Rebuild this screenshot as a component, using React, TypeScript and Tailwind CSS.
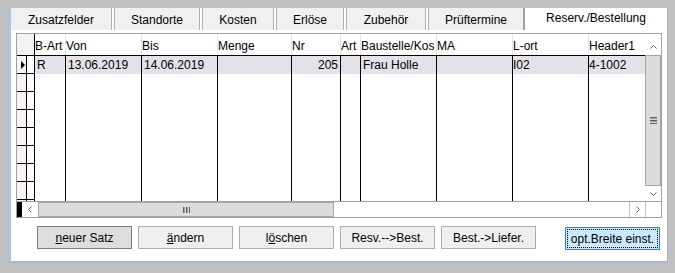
import React from "react";

type Dir = "up" | "down" | "left" | "right";

function Chevron({ dir }: { dir: Dir }) {
  if (dir === "up" || dir === "down") {
    const d = dir === "up" ? "M0.5 4.5 L3.5 1.5 L6.5 4.5" : "M0.5 1.5 L3.5 4.5 L6.5 1.5";
    return (
      <svg width="7" height="6" viewBox="0 0 7 6">
        <path d={d} stroke="#606060" strokeWidth="1" fill="none" />
      </svg>
    );
  }
  const d = dir === "left" ? "M4.5 0.5 L1.5 3.5 L4.5 6.5" : "M1.5 0.5 L4.5 3.5 L1.5 6.5";
  return (
    <svg width="6" height="7" viewBox="0 0 6 7">
      <path d={d} stroke="#606060" strokeWidth="1" fill="none" />
    </svg>
  );
}

function GripV() {
  return (
    <svg width="7" height="7" viewBox="0 0 7 7">
      <rect x="0" y="0" width="7" height="1.5" fill="#606060" />
      <rect x="0" y="3" width="7" height="1.5" fill="#606060" />
      <rect x="0" y="6" width="7" height="1" fill="#606060" />
    </svg>
  );
}

function GripH() {
  return (
    <svg width="7" height="6" viewBox="0 0 7 6">
      <rect x="0" y="0" width="1.5" height="6" fill="#606060" />
      <rect x="3" y="0" width="1.5" height="6" fill="#606060" />
      <rect x="6" y="0" width="1" height="6" fill="#606060" />
    </svg>
  );
}

const rows = [0, 1, 2, 3, 4, 5, 6, 7];

export default function App() {
  return (
    <div className="h-[273px] w-[675px] overflow-hidden bg-[#c0c0c0] pl-[8px] pt-[8px] font-['Liberation_Sans',Arial,sans-serif] text-[12px] leading-[14px] text-black">
      <div className="flex h-[255px] w-[660px] flex-col border-b-2 border-l-[3px] border-r border-b-[#a6bad3] border-l-[#abc3df] border-r-[#a3b3c8] bg-white">
        {/* tab strip */}
        <div className="flex h-[25px] items-start">
          <div className="h-[22px] w-[101px] border-r border-[#b0b0b0] bg-[#f0f0f0] pt-[5px] text-center">Zusatzfelder</div>
          <div className="ml-[2px] h-[22px] w-[86px] border-x border-[#b0b0b0] bg-[#f0f0f0] pt-[5px] text-center">Standorte</div>
          <div className="ml-[2px] h-[22px] w-[72px] border-x border-[#b0b0b0] bg-[#f0f0f0] pt-[5px] text-center">Kosten</div>
          <div className="ml-[2px] h-[22px] w-[68px] border-x border-[#b0b0b0] bg-[#f0f0f0] pt-[5px] text-center">Erlöse</div>
          <div className="ml-[2px] h-[22px] w-[80px] border-x border-[#b0b0b0] bg-[#f0f0f0] pt-[5px] text-center">Zubehör</div>
          <div className="ml-[2px] h-[22px] w-[97px] border-l border-r-2 border-l-[#b0b0b0] border-r-[#a0a0a0] bg-[#f0f0f0] pt-[5px] text-center">Prüftermine</div>
          <div className="h-[25px] flex-1 bg-white pt-[3px] text-center">Reserv./Bestellung</div>
        </div>

        {/* grid */}
        <div className="ml-[5px] flex h-[185px] w-[646px] flex-col border border-[#a0a0a0]">
          <div className="flex h-[167px]">
            <div className="flex w-[628px] flex-col">
              {/* header */}
              <div className="flex h-[22px] border-b border-black">
                <div className="w-[18px] border-r border-black bg-[#f4f1f4]" />
                <div className="w-[31px] overflow-hidden whitespace-nowrap border-r border-[#e4e4e4] pt-[5px]">B-Art</div>
                <div className="w-[76px] overflow-hidden whitespace-nowrap border-r border-[#e4e4e4] pt-[5px]">Von</div>
                <div className="w-[76px] overflow-hidden whitespace-nowrap border-r border-[#e4e4e4] pt-[5px]">Bis</div>
                <div className="w-[74px] overflow-hidden whitespace-nowrap border-r border-[#e4e4e4] pt-[5px]">Menge</div>
                <div className="w-[49px] overflow-hidden whitespace-nowrap border-r border-[#e4e4e4] pt-[5px]">Nr</div>
                <div className="w-[20px] overflow-hidden whitespace-nowrap border-r border-[#e4e4e4] pt-[5px]">Art</div>
                <div className="w-[76px] overflow-hidden whitespace-nowrap border-r border-[#e4e4e4] pt-[5px]">Baustelle/Kos</div>
                <div className="w-[76px] overflow-hidden whitespace-nowrap border-r border-[#e4e4e4] pt-[5px]">MA</div>
                <div className="w-[76px] overflow-hidden whitespace-nowrap border-r border-[#e4e4e4] pt-[5px]">L-ort</div>
                <div className="w-[56px] overflow-hidden whitespace-nowrap pt-[5px]">Header1</div>
              </div>

              {/* body */}
              <div className="flex h-[145px]">
                <div className="flex w-[10px] flex-col border-r border-black bg-[#f7f3f7]">
                  {rows.map((i) => (
                    <div key={i} className="flex h-[18px] shrink-0 items-center border-b border-black pl-[4px]">
                      {i === 0 && (
                        <svg width="4" height="8" viewBox="0 0 4 8">
                          <polygon points="0,0 4,4 0,8" fill="#000" />
                        </svg>
                      )}
                    </div>
                  ))}
                </div>
                <div className="flex w-[8px] flex-col border-r border-black bg-white">
                  {rows.map((i) => (
                    <div key={i} className="h-[18px] shrink-0 border-b border-black" />
                  ))}
                </div>
                <div className="w-[31px] border-r border-black">
                  <div className="h-[18px] overflow-hidden whitespace-nowrap bg-[#e4e2e8] pl-[2px] pt-[2px]">R</div>
                </div>
                <div className="w-[76px] border-r border-black">
                  <div className="h-[18px] overflow-hidden whitespace-nowrap bg-[#e4e2e8] pl-[2px] pt-[2px]">13.06.2019</div>
                </div>
                <div className="w-[76px] border-r border-black">
                  <div className="h-[18px] overflow-hidden whitespace-nowrap bg-[#e4e2e8] pl-[2px] pt-[2px]">14.06.2019</div>
                </div>
                <div className="w-[74px] border-r border-black">
                  <div className="h-[18px] bg-[#e4e2e8]" />
                </div>
                <div className="w-[49px] border-r border-black">
                  <div className="h-[18px] overflow-hidden whitespace-nowrap bg-[#e4e2e8] pr-[2px] pt-[2px] text-right">205</div>
                </div>
                <div className="w-[20px] border-r border-black">
                  <div className="h-[18px] bg-[#e4e2e8]" />
                </div>
                <div className="w-[76px] border-r border-black">
                  <div className="h-[18px] overflow-hidden whitespace-nowrap bg-[#e4e2e8] pl-[2px] pt-[2px]">Frau Holle</div>
                </div>
                <div className="w-[76px] border-r border-black">
                  <div className="h-[18px] bg-[#e4e2e8]" />
                </div>
                <div className="w-[76px] border-r border-black">
                  <div className="h-[18px] overflow-hidden whitespace-nowrap bg-[#e4e2e8] pt-[2px]">I02</div>
                </div>
                <div className="w-[56px]">
                  <div className="h-[18px] overflow-hidden whitespace-nowrap bg-[#e4e2e8] pt-[2px]">4-1002</div>
                </div>
              </div>
            </div>

            {/* vertical scrollbar */}
            <div className="flex w-[16px] flex-col bg-white">
              <div className="flex h-[21px] items-center justify-center pt-[4px]">
                <Chevron dir="up" />
              </div>
              <div className="flex flex-1 items-center justify-center border border-[#a6a6a6] bg-[#dcdcdc]">
                <GripV />
              </div>
              <div className="flex h-[15px] items-center justify-center">
                <Chevron dir="down" />
              </div>
            </div>
          </div>

          {/* horizontal scrollbar */}
          <div className="flex h-[16px] border-t border-[#a0a0a0]">
            <div className="w-[5px] bg-black" />
            <div className="flex w-[16px] items-center justify-center bg-white">
              <Chevron dir="left" />
            </div>
            <div className="flex w-[296px] items-center justify-center border border-[#a6a6a6] bg-[#dcdcdc]">
              <GripH />
            </div>
            <div className="flex-1 bg-white" />
            <div className="flex w-[16px] items-center justify-center border-l border-[#c8c8c8] bg-white">
              <Chevron dir="right" />
            </div>
            <div className="w-[16px] border-l border-[#c8c8c8] bg-white" />
          </div>
        </div>

        {/* buttons */}
        <div className="mt-[8px] flex items-start gap-[6px] pl-[26px]">
          <button className="flex h-[23px] w-[95px] items-center justify-center border border-[#7a7a7a] bg-[#dddddd]">
            <span><u>n</u>euer Satz</span>
          </button>
          <button className="flex h-[23px] w-[95px] items-center justify-center border border-[#adadad] bg-[#efefef]">
            <span><u>ä</u>ndern</span>
          </button>
          <button className="flex h-[23px] w-[95px] items-center justify-center border border-[#adadad] bg-[#efefef]">
            <span>l<u>ö</u>schen</span>
          </button>
          <button className="flex h-[23px] w-[95px] items-center justify-center border border-[#adadad] bg-[#efefef]">
            Resv.--&gt;Best.
          </button>
          <button className="flex h-[23px] w-[95px] items-center justify-center border border-[#adadad] bg-[#efefef]">
            Best.-&gt;Liefer.
          </button>
          <button className="ml-[23px] mt-[1px] h-[23px] w-[95px] border border-[#2f86d8] bg-[#cce8ff] p-[1px]">
            <div className="flex h-full w-full items-center justify-center border border-dotted border-black">
              opt.Breite einst.
            </div>
          </button>
        </div>
      </div>
    </div>
  );
}
